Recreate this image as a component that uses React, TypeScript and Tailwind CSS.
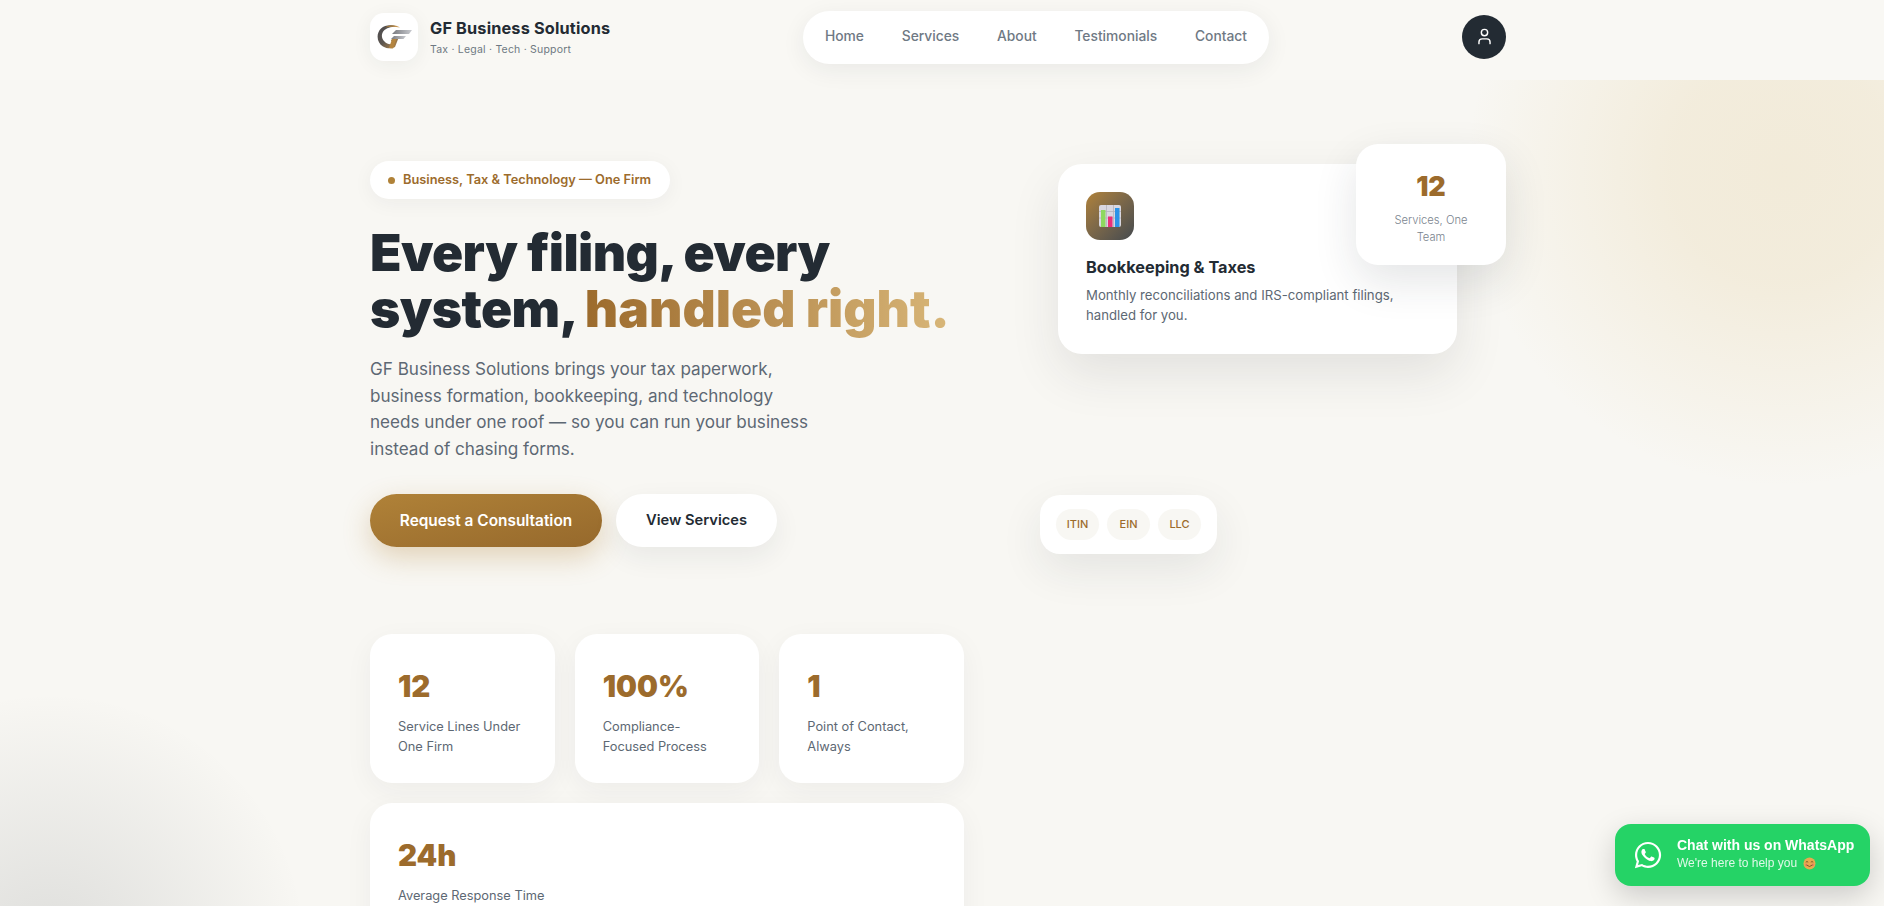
import { User } from 'lucide-react';
import { FaWhatsapp } from 'react-icons/fa';

const navLinks = ['Home', 'Services', 'About', 'Testimonials', 'Contact'];

const stats = [
  { value: '12', label: ['Service Lines Under', 'One Firm'] },
  { value: '100%', label: ['Compliance-', 'Focused Process'] },
  { value: '1', label: ['Point of Contact,', 'Always'] },
];

function GfLogo() {
  return (
    <svg width="36" height="26" viewBox="0 0 36 26" fill="none">
      <defs>
        <linearGradient id="gfGold" x1="0" y1="0" x2="1" y2="1">
          <stop offset="0" stopColor="#4a4a4e" />
          <stop offset="0.5" stopColor="#5c5650" />
          <stop offset="1" stopColor="#c08d48" />
        </linearGradient>
        <linearGradient id="gfTop" x1="0" y1="0" x2="1" y2="0">
          <stop offset="0" stopColor="#8f6a34" />
          <stop offset="1" stopColor="#d8a257" />
        </linearGradient>
        <linearGradient id="gfSilver" x1="0" y1="0" x2="1" y2="0">
          <stop offset="0" stopColor="#77797e" />
          <stop offset="1" stopColor="#c9cbd0" />
        </linearGradient>
      </defs>
      <path d="M21 2.500C16 .5 9 .5 5 4.500 -.5 10 1 19 7 22.500c4 2.300 9 2.500 12 .5l3.500-9h-6l-1.500 3h3l-1 2.500c-3 1.500-6 .5-8.500-2C5 14.500 5 9 8.500 6c3.500-3 8-3.500 12.500-3.500z" fill="url(#gfGold)" />
      <path d="M9 3.500C13 .5 19 .2 24 3.500c-5-1-10-1-15 0z" fill="url(#gfTop)" />
      <path d="M16 10L20 6H36L33 10z" fill="url(#gfSilver)" />
      <path d="M15 15L18 12H30L27.500 15z" fill="url(#gfSilver)" />
      <path d="M16 15H20.500L17 24.500 13 24z" fill="#b5853f" />
    </svg>
  );
}

function ChartEmoji() {
  return (
    <svg width="22" height="22" viewBox="0 0 22 22">
      <rect x="0" y="0" width="22" height="22" rx="2" fill="#d9d7e0" />
      <path d="M0 6.500H22M0 13H22M7.500 0V22M14.500 0V22" stroke="#b5b3bd" strokeWidth="0.8" />
      <rect x="2" y="5" width="4.500" height="17" fill="#8ed85f" />
      <rect x="9" y="11.500" width="4.500" height="10.500" fill="#ea2f78" />
      <rect x="16" y="3" width="4.500" height="19" fill="#2b93e8" />
    </svg>
  );
}

function SmileEmoji() {
  return (
    <svg width="13" height="13" viewBox="0 0 13 13" className="inline-block">
      <circle cx="6.500" cy="6.500" r="6" fill="#e8a94f" />
      <circle cx="3.200" cy="7.800" r="1.400" fill="#e88562" />
      <circle cx="9.800" cy="7.800" r="1.400" fill="#e88562" />
      <path d="M2.800 5.200Q4 3.800 5.200 5.200M7.800 5.200Q9 3.800 10.200 5.200" stroke="#6b4a1e" strokeWidth="0.8" fill="none" />
      <path d="M3.500 8Q6.500 11 9.500 8" stroke="#6b4a1e" strokeWidth="0.8" fill="none" />
    </svg>
  );
}

export default function App() {
  return (
    <div className="relative h-screen overflow-hidden bg-[#f8f7f3] font-['Inter',sans-serif] text-[#232b33]">
      {/* Header */}
      <header className="relative z-10 h-[80px] bg-[#f9f8f4] pr-2">
        <div className="mx-auto flex h-full w-[1136px] items-center justify-between pb-[5px]">
          <div className="mb-[2px] flex w-[433px] items-center gap-3">
            <div className="flex h-12 w-12 items-center justify-center rounded-[14px] bg-white shadow-[0_4px_20px_rgba(35,43,51,0.06)]">
              <GfLogo />
            </div>
            <div>
              <div className="text-[16.300px] font-bold leading-[22px] tracking-[0.01em]">GF Business Solutions</div>
              <div className="mt-[4px] text-[10.500px] leading-[14px] tracking-[0.02em] text-[#6e7882]">Tax · Legal · Tech · Support</div>
            </div>
          </div>
          <nav className="flex h-[53px] w-[466px] items-center justify-between rounded-full bg-white px-[22px] pb-[2px] shadow-[0_6px_24px_rgba(35,43,51,0.07)]">
            {navLinks.map((link) => (
              <a key={link} href="#" className="text-[13.800px] font-medium text-[#6f7984]">
                {link}
              </a>
            ))}
          </nav>
          <div className="mb-[2px] flex w-[237px] justify-end">
            <button className="flex h-11 w-11 items-center justify-center rounded-full bg-[#232b33] text-white">
              <User size={19} strokeWidth={1.8} />
            </button>
          </div>
        </div>
      </header>

      {/* Hero */}
      <main className="relative h-[826px] overflow-hidden pr-2">
        <div className="absolute right-[-219px] top-[-230px] h-[640px] w-[640px] rounded-full bg-[radial-gradient(circle,rgba(212,175,90,0.17)_0%,rgba(212,175,90,0.15)_25%,rgba(212,175,90,0)_70%)]" />
        <div className="absolute bottom-[-304px] left-[-210px] h-[520px] w-[520px] rounded-full bg-[radial-gradient(circle,rgba(35,43,51,0.12)_0%,rgba(35,43,51,0)_70%)]" />

        <div className="relative mx-auto grid w-[1136px] grid-cols-[594px_1fr] gap-[76px] pt-[81px]">
          {/* Left column */}
          <div>
            <div className="inline-flex h-[38px] w-[300px] items-center gap-2 rounded-full bg-white pl-[18px] shadow-[0_4px_20px_rgba(35,43,51,0.05)]">
              <span className="h-[7px] w-[7px] rounded-full bg-[#b08238]" />
              <span className="text-[12.800px] font-semibold text-[#9c6b2c]">Business, Tax &amp; Technology — One Firm</span>
            </div>

            <h1 className="mt-[25px] text-[51.500px] font-black leading-[56px] tracking-[-0.012em]">
              Every filing, every
              <br />
              system,{' '}
              <span className="bg-gradient-to-r from-[#9c6b2c] to-[#d8b678] bg-clip-text tracking-[0] text-transparent">handled right.</span>
            </h1>

            <p className="mt-[20px] text-[17.100px] leading-[26.500px] text-[#5d6873]">
              GF Business Solutions brings your tax paperwork,
              <br />
              business formation, bookkeeping, and technology
              <br />
              needs under one roof — so you can run your business
              <br />
              instead of chasing forms.
            </p>

            <div className="mt-[32px] flex gap-[14px]">
              <a href="#" className="flex h-[53px] w-[232px] items-center justify-center rounded-full bg-gradient-to-br from-[#b08238] to-[#96692c] text-[15.400px] font-semibold text-white shadow-[0_10px_28px_rgba(176,130,56,0.32)]">
                Request a Consultation
              </a>
              <a href="#" className="flex h-[53px] w-[161px] items-center justify-center rounded-full bg-white text-[14.700px] font-semibold shadow-[0_10px_28px_rgba(35,43,51,0.07)]">
                View Services
              </a>
            </div>

            <div className="mt-[87px] grid grid-cols-3 gap-5">
              {stats.map((stat) => (
                <div key={stat.value} className="h-[149px] rounded-[22px] bg-white px-7 pt-[32px] shadow-[0_8px_28px_rgba(35,43,51,0.05)]">
                  <div className="text-[29.500px] font-black leading-[40px] text-[#9c6b2c]">{stat.value}</div>
                  <div className="mt-[11px] text-[12.800px] leading-[20px] text-[#5d6873]">
                    {stat.label[0]}
                    <br />
                    {stat.label[1]}
                  </div>
                </div>
              ))}
              <div className="col-span-3 h-[149px] rounded-[22px] bg-white px-7 pt-[32px] shadow-[0_8px_28px_rgba(35,43,51,0.05)]">
                <div className="text-[29.500px] font-black leading-[40px] text-[#9c6b2c]">24h</div>
                <div className="mt-[11px] text-[12.800px] leading-[20px] text-[#5d6873]">Average Response Time</div>
              </div>
            </div>
          </div>

          {/* Right column: floating cards */}
          <div className="relative">
            <div className="absolute left-[18px] top-[3px] h-[190px] w-[399px] rounded-[24px] bg-white px-7 pt-7 shadow-[0_20px_50px_rgba(35,43,51,0.1)]">
              <div className="flex h-12 w-12 items-center justify-center rounded-[14px] bg-gradient-to-br from-[#b08238] to-[#454a4e]">
                <ChartEmoji />
              </div>
              <div className="mt-[16px] text-[16.300px] font-bold leading-[22px]">Bookkeeping &amp; Taxes</div>
              <div className="mt-[7px] text-[13.200px] leading-[20px] text-[#5d6873]">
                Monthly reconciliations and IRS-compliant filings,
                <br />
                handled for you.
              </div>
            </div>
            <div className="absolute left-[316px] top-[-17px] flex h-[121px] w-[150px] flex-col items-center rounded-[22px] bg-white pt-[26px] text-center shadow-[0_16px_44px_rgba(35,43,51,0.12)]">
              <div className="text-[27px] font-black leading-[34px] text-[#9c6b2c]">12</div>
              <div className="mt-[8px] text-[11.200px] font-light leading-[17px] text-[#7a848e]">
                Services, One
                <br />
                Team
              </div>
            </div>
            <div className="absolute left-0 top-[334px] flex h-[59px] w-[177px] items-center justify-center gap-2 rounded-[20px] bg-white shadow-[0_16px_44px_rgba(35,43,51,0.09)]">
              {['ITIN', 'EIN', 'LLC'].map((tag) => (
                <span key={tag} className="flex h-[31px] w-[43px] items-center justify-center rounded-full bg-[#f8f7f3] text-[11px] font-medium text-[#9c6b2c]">
                  {tag}
                </span>
              ))}
            </div>
          </div>
        </div>
      </main>

      {/* WhatsApp */}
      <a href="#" className="fixed bottom-5 right-[14px] z-20 flex h-[62px] w-[255px] items-center gap-[14px] rounded-[16px] bg-[#25d366] pl-[18px] text-white shadow-[0_10px_30px_rgba(0,0,0,0.18)] font-['Liberation_Sans',sans-serif]">
        <FaWhatsapp size={30} />
        <div className="mb-[2px]">
          <div className="text-[14px] font-bold leading-[18px]">Chat with us on WhatsApp</div>
          <div className="mt-[1px] flex items-center gap-[6px] text-[12px] leading-[17px] text-white/85">
            We're here to help you <SmileEmoji />
          </div>
        </div>
      </a>
    </div>
  );
}
